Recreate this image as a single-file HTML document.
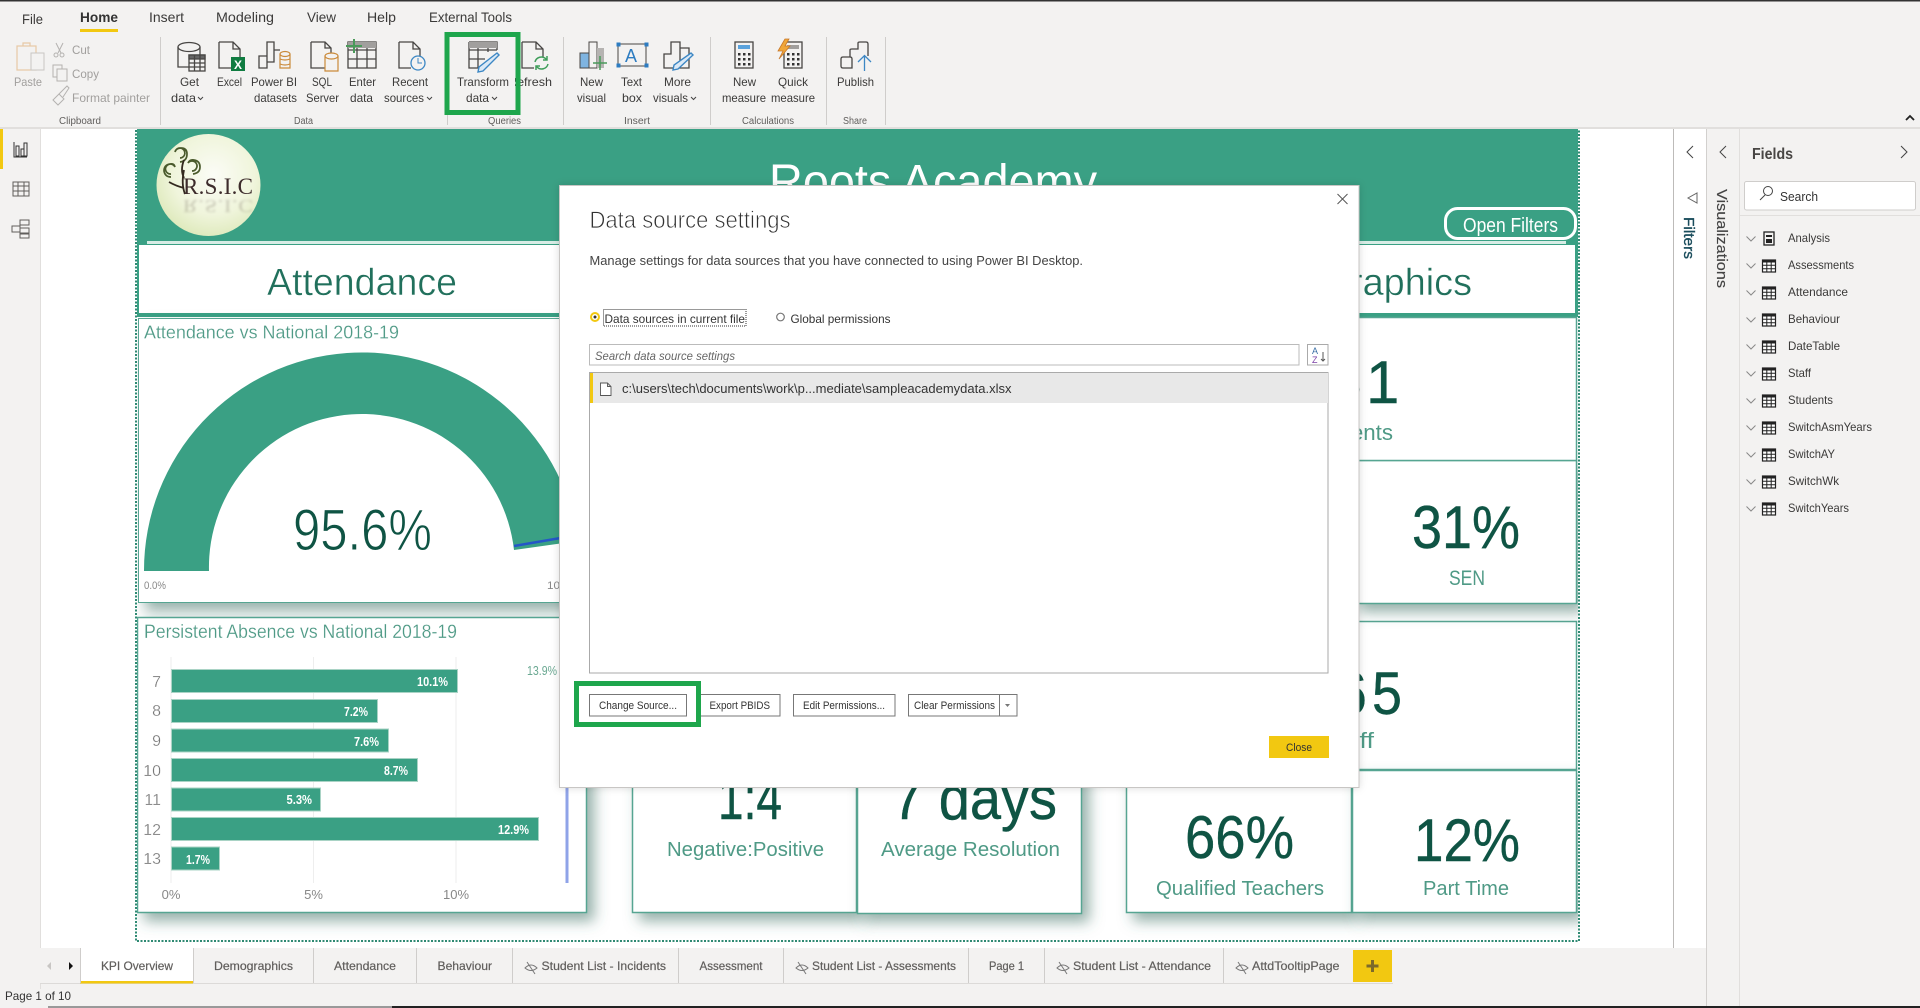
<!DOCTYPE html>
<html lang="en"><head><meta charset="utf-8"><title>Data source settings</title>
<style>
html,body{margin:0;padding:0;width:1920px;height:1008px;overflow:hidden;background:#fff}
svg{display:block}
text{font-family:"Liberation Sans",sans-serif;fill:#444;font-size:12px}
.thin{stroke:#fff;stroke-width:.45px}
.rb{font-size:12px;fill:#3b3a39}
.dis{fill:#a19f9d}
.grp{font-size:10px;fill:#605e5c}
.tab{font-size:14px;fill:#3b3a39}
.ic{fill:none;stroke:#484644;stroke-width:1.3}
.kl{font-size:22px;fill:#4f9a86}
.kv{font-size:60px;fill:#0f5444;stroke:#0f5444;stroke-width:.4px}
.pt{font-size:12px;fill:#605e5c;stroke:#605e5c;stroke-width:.2px}
.fl{font-size:12px;fill:#3b3a39}
.bv{font-size:13px;font-weight:bold;fill:#fff}
.cat{font-size:16px;fill:#777;stroke:#fff;stroke-width:.25px}
.ax{font-size:13px;fill:#888}
.btn{font-size:11px;fill:#333}
</style></head><body>
<svg width="1920" height="1008" viewBox="0 0 1920 1008" xmlns="http://www.w3.org/2000/svg">
<defs>
<filter id="s" x="-10%" y="-20%" width="125%" height="150%"><feDropShadow dx="7" dy="8" stdDeviation="7" flood-color="#3f6f63" flood-opacity=".55"/></filter>
<filter id="m" x="-3%" y="-3%" width="106%" height="106%"><feDropShadow dx="0" dy="0" stdDeviation="4" flood-color="#000" flood-opacity=".15"/></filter>
<filter id="b" x="-10%" y="-30%" width="120%" height="160%"><feGaussianBlur stdDeviation="1.2"/></filter>
<clipPath id="rep"><rect x="137" y="129" width="1441" height="812"/></clipPath>
<radialGradient id="lg" cx="55%" cy="40%" r="65%"><stop offset="0" stop-color="#fbfcf6"/><stop offset=".6" stop-color="#f0f5dc"/><stop offset="1" stop-color="#dce8b8"/></radialGradient>
<g id="t"><rect x="0" y="0" width="13" height="12" fill="#fff" stroke="#222" stroke-width="1.2"/><rect x="0" y="0" width="13" height="2.5" fill="#222"/><path d="M4.3 0V12M8.7 0V12M0 5.3H13M0 8.7H13" stroke="#222" stroke-width="1" fill="none"/></g>
<path id="ch" d="M0 0l4.500 4.500 4.500-4.500" fill="none" stroke="#888" stroke-width="1"/>
<path id="dd" d="M0 0l2.5 2.5L5 0" fill="none" stroke="#444" stroke-width="1"/>
<g id="eye"><path d="M0 5Q6-1 12 5Q6 10 0 5Z" fill="none" stroke="#777" stroke-width="1"/><path d="M2 -1L10 11" stroke="#777" stroke-width="1"/></g>
</defs>

<!-- base -->
<rect width="1920" height="1008" fill="#f3f2f1"/>
<rect x="0" y="0" width="1920" height="1.5" fill="#333"/>
<rect x="0" y="127" width="1920" height="2" fill="#e1dfdd"/>
<rect x="41" y="129" width="1632" height="819" fill="#fff"/>

<!-- ribbon tabs -->
<text x="22" y="24" textLength="21" lengthAdjust="spacingAndGlyphs" class="tab">File</text>
<text x="80" y="22" textLength="38" lengthAdjust="spacingAndGlyphs" class="tab" style="font-weight:bold;fill:#333">Home</text>
<rect x="80" y="29" width="38" height="3" fill="#f2c811"/>
<text x="149" y="22" textLength="35" lengthAdjust="spacingAndGlyphs" class="tab">Insert</text>
<text x="216" y="22" textLength="58" lengthAdjust="spacingAndGlyphs" class="tab">Modeling</text>
<text x="307" y="22" textLength="29" lengthAdjust="spacingAndGlyphs" class="tab">View</text>
<text x="367" y="22" textLength="29" lengthAdjust="spacingAndGlyphs" class="tab">Help</text>
<text x="429" y="22" textLength="83" lengthAdjust="spacingAndGlyphs" class="tab">External Tools</text>

<!-- separators -->
<path d="M160.500 37V125M447.500 37V125M563.500 37V125M710.500 37V125M826.500 37V125M885.500 37V125" stroke="#cfcdcb" stroke-width="1"/>

<!-- clipboard -->
<g fill="none" stroke="#e7c9a5" stroke-width="1.2"><rect x="17" y="46" width="19" height="24"/><path d="M23 46v-3h7v3"/></g>
<rect x="31" y="53" width="13" height="17" fill="#f3f2f1" stroke="#c8c6c4"/>
<text x="14" y="86" textLength="28" lengthAdjust="spacingAndGlyphs" class="rb dis">Paste</text>
<path d="M56 43l5 10M63 43l-5 10" stroke="#b4b2b0" fill="none"/><circle cx="56" cy="55" r="2" fill="none" stroke="#b4b2b0"/><circle cx="62" cy="55" r="2" fill="none" stroke="#b4b2b0"/>
<text x="72" y="54" textLength="18" lengthAdjust="spacingAndGlyphs" class="rb dis">Cut</text>
<rect x="53" y="65" width="9" height="12" fill="none" stroke="#b4b2b0"/><rect x="57" y="69" width="10" height="12" fill="#f3f2f1" stroke="#b4b2b0"/>
<text x="72" y="78" textLength="27" lengthAdjust="spacingAndGlyphs" class="rb dis">Copy</text>
<path d="M53 100l6-6 5 5-6 6zM59 94l8-8 2 2-6 9" fill="none" stroke="#b4b2b0"/>
<text x="72" y="102" textLength="78" lengthAdjust="spacingAndGlyphs" class="rb dis">Format painter</text>
<text x="59" y="124" textLength="42" lengthAdjust="spacingAndGlyphs" class="grp">Clipboard</text>

<!-- data group icons -->
<g class="ic">
<path d="M178 47v20h11M200 47v8"/><ellipse cx="189" cy="47" rx="11" ry="4.500"/>
<rect x="189" y="55" width="16" height="16" fill="#f3f2f1"/><rect x="189" y="55" width="16" height="4" fill="#666"/><path d="M194.500 55v16M200 55v16M189 63h16M189 67h16"/>
<path d="M219 42h14l7 7v8M219 42v26h12M233 42v7h7"/>
<path d="M267 42h7v20h-7zM259 56h8v12h-8zM274 50h6"/>
<path d="M311 42h14l6 6v5M311 42v26h14M325 42v6h6"/>
<path d="M348 42h28v26h-28zM348 50h28M348 59h28M357 42v26M367 42v26"/>
<path d="M399 42h14l7 7v7M399 42v26h12M413 42v7h7"/>
<path d="M469 42h28v8M469 42v26h12M469 50h28M469 59h16M478 42v26M488 42v10"/>
<path d="M522 42h14l7 7v8M522 42v26h12M536 42v7h7"/>
</g>
<rect x="348" y="42" width="28" height="6" fill="#a19f9d"/>
<rect x="469" y="42" width="28" height="6" fill="#a19f9d"/>
<rect x="231" y="57" width="14" height="14" fill="#107c41"/><text x="234" y="69" font-weight="bold" style="font-size:12px;fill:#fff;font-weight:bold">X</text>
<g fill="#f3f2f1" stroke="#ca8a3a" stroke-width="1.2"><path d="M280 54v14h10V54"/><ellipse cx="285" cy="54" rx="5" ry="2.500"/><path d="M280 59q5 2 10 0M280 64q5 2 10 0" fill="none"/>
<path d="M325 56v15h13V56"/><ellipse cx="331.500" cy="56" rx="6.500" ry="3"/></g>
<path d="M354 39v14M346 46h16" stroke="#4a9a5a" stroke-width="2"/>
<circle cx="418" cy="63" r="7" fill="#f3f2f1" stroke="#3c87c4" stroke-width="1.300"/><path d="M418 58v5h4" fill="none" stroke="#3c87c4"/>
<path d="M497 53l2 2-16 16-5 1 1-5z" fill="#dbe9f6" stroke="#3c87c4" stroke-width="1.400"/>
<g fill="none" stroke="#3f9e5a" stroke-width="1.500"><path d="M535 62a6.500 6.500 0 0 1 11-3l1 1M548 64a6.500 6.500 0 0 1-11 3l-1-1"/><path d="M547 56v4h-4M536 70v-4h4"/></g>

<!-- ribbon labels -->
<text x="180" y="86" textLength="19" lengthAdjust="spacingAndGlyphs" class="rb">Get</text><text x="171" y="102" textLength="25" lengthAdjust="spacingAndGlyphs" class="rb">data</text><use href="#dd" x="198" y="97"/>
<text x="217" y="86" textLength="25" lengthAdjust="spacingAndGlyphs" class="rb">Excel</text>
<text x="251" y="86" textLength="46" lengthAdjust="spacingAndGlyphs" class="rb">Power BI</text><text x="254" y="102" textLength="43" lengthAdjust="spacingAndGlyphs" class="rb">datasets</text>
<text x="312" y="86" textLength="20" lengthAdjust="spacingAndGlyphs" class="rb">SQL</text><text x="306" y="102" textLength="33" lengthAdjust="spacingAndGlyphs" class="rb">Server</text>
<text x="349" y="86" textLength="27" lengthAdjust="spacingAndGlyphs" class="rb">Enter</text><text x="350" y="102" textLength="23" lengthAdjust="spacingAndGlyphs" class="rb">data</text>
<text x="392" y="86" textLength="36" lengthAdjust="spacingAndGlyphs" class="rb">Recent</text><text x="384" y="102" textLength="40" lengthAdjust="spacingAndGlyphs" class="rb">sources</text><use href="#dd" x="427" y="97"/>
<text x="508" y="86" textLength="44" lengthAdjust="spacingAndGlyphs" class="rb">Refresh</text>
<rect x="506" y="73" width="9" height="16" fill="#f3f2f1"/>
<text x="457" y="86" textLength="52" lengthAdjust="spacingAndGlyphs" class="rb">Transform</text><text x="466" y="102" textLength="23" lengthAdjust="spacingAndGlyphs" class="rb">data</text><use href="#dd" x="492" y="97"/>
<text x="294" y="124" textLength="19" lengthAdjust="spacingAndGlyphs" class="grp">Data</text>
<text x="488" y="124" textLength="33" lengthAdjust="spacingAndGlyphs" class="grp">Queries</text>

<!-- green highlight ribbon -->
<rect x="447" y="34.500" width="71" height="78" fill="none" stroke="#1ea64c" stroke-width="5"/>

<!-- insert group -->
<rect x="580" y="53" width="10" height="15" fill="#7fb4e0" stroke="#484644"/><rect x="589" y="42" width="8" height="26" fill="#f3f2f1" stroke="#484644"/><rect x="597" y="48" width="7" height="20" fill="#b5b3b1"/>
<path d="M600 56v14M593 63h14" stroke="#4a9a5a" stroke-width="1.500"/>
<rect x="618" y="44" width="28" height="22" fill="#f3f2f1" stroke="#484644"/><path d="M617 43h3v3h-3zM645 43h3v3h-3zM617 64h3v3h-3zM645 64h3v3h-3z" fill="#2d7cc1" stroke="#2d7cc1"/>
<text x="625" y="62" style="font-size:18px;fill:#2d7cc1">A</text>
<g class="ic"><path d="M664 68V54h7V42h9v26zM664 68h25V48h-9"/></g>
<path d="M691 53l2 2-15 14-5 1 1-5z" fill="#dbe9f6" stroke="#3c87c4" stroke-width="1.400"/>
<text x="580" y="86" textLength="23" lengthAdjust="spacingAndGlyphs" class="rb">New</text><text x="577" y="102" textLength="29" lengthAdjust="spacingAndGlyphs" class="rb">visual</text>
<text x="621" y="86" textLength="21" lengthAdjust="spacingAndGlyphs" class="rb">Text</text><text x="622" y="102" textLength="20" lengthAdjust="spacingAndGlyphs" class="rb">box</text>
<text x="664" y="86" textLength="27" lengthAdjust="spacingAndGlyphs" class="rb">More</text><text x="653" y="102" textLength="35" lengthAdjust="spacingAndGlyphs" class="rb">visuals</text><use href="#dd" x="691" y="97"/>
<text x="624" y="124" textLength="26" lengthAdjust="spacingAndGlyphs" class="grp">Insert</text>

<!-- calculations -->
<rect x="735" y="42" width="18" height="26" fill="#f3f2f1" stroke="#484644" stroke-width="1.300"/><rect x="738" y="45" width="12" height="4" fill="#5aa2dc"/>
<path d="M738 53h2.500v2.500H738zM743 53h2.500v2.500H743zM748 53h2.500v2.500H748zM738 58h2.500v2.500H738zM743 58h2.500v2.500H743zM748 58h2.500v2.500H748zM738 63h2.500v2.500H738zM743 63h2.500v2.500H743zM748 63h2.500v2.500H748z" fill="#333"/>
<rect x="784" y="42" width="18" height="26" fill="#f3f2f1" stroke="#484644" stroke-width="1.300"/><rect x="787" y="45" width="12" height="4" fill="#a19f9d"/>
<path d="M787 53h2.500v2.500H787zM792 53h2.500v2.500H792zM797 53h2.500v2.500H797zM787 58h2.500v2.500H787zM792 58h2.500v2.500H792zM797 58h2.500v2.500H797zM787 63h2.500v2.500H787zM792 63h2.500v2.500H792zM797 63h2.500v2.500H797z" fill="#333"/>
<path d="M785 39l-7 12h5l-4 8 11-13h-5l4-7z" fill="#f0a73a" stroke="#c8782a" stroke-width=".8"/>
<text x="733" y="86" textLength="23" lengthAdjust="spacingAndGlyphs" class="rb">New</text><text x="722" y="102" textLength="44" lengthAdjust="spacingAndGlyphs" class="rb">measure</text>
<text x="778" y="86" textLength="30" lengthAdjust="spacingAndGlyphs" class="rb">Quick</text><text x="771" y="102" textLength="44" lengthAdjust="spacingAndGlyphs" class="rb">measure</text>
<text x="742" y="124" textLength="52" lengthAdjust="spacingAndGlyphs" class="grp">Calculations</text>

<!-- publish -->
<g class="ic"><path d="M846 68h-3q-2 0-2-2V59q0-2 2-2h7q2 0 2 2v9h-6M850 57v-7q0-1 2-1h6v-6q0-1 2-1h6q2 0 2 2v12"/></g>
<path d="M864.500 71V56M858 62l6.500-6.500L871 62" fill="none" stroke="#3c87c4" stroke-width="1.300"/>
<text x="837" y="86" textLength="37" lengthAdjust="spacingAndGlyphs" class="rb">Publish</text>
<text x="843" y="124" textLength="24" lengthAdjust="spacingAndGlyphs" class="grp">Share</text>
<path d="M1906 120l4-4 4 4" fill="none" stroke="#222" stroke-width="1.800"/>

<!-- left rail -->
<rect x="0" y="129" width="3" height="40" fill="#f2c811"/>
<rect x="40" y="129" width="1" height="860" fill="#e1dfdd"/>
<path d="M14 142v15h13M16 146h3v10h-3zM21 149h3v7h-3zM24 143h3v13h-3z" fill="none" stroke="#333" stroke-width="1"/>
<g fill="none" stroke="#605e5c" stroke-width="1"><rect x="13" y="182" width="16" height="14"/><path d="M13 186h16M13 191h16M18 182v14M24 182v14"/>
<rect x="20" y="220" width="9" height="5"/><rect x="12" y="226" width="8" height="6"/><rect x="20" y="228" width="9" height="5"/><rect x="20" y="234" width="9" height="4"/></g>

<!-- report header -->
<rect x="137" y="129" width="1441" height="112" fill="#3aa084"/>
<rect x="137" y="241" width="1441" height="76" fill="#3aa084"/>
<ellipse cx="208.500" cy="185" rx="52" ry="51" fill="url(#lg)"/>
<g fill="none" stroke="#4a5a2c" stroke-width="1.700">
<path d="M180 158a5 5 0 1 0-5-6q1-4 6-4 6 0 6 6 0 7-7 8"/>
<path d="M171 174a5 5 0 1 1 4-7q-1-4-5-3-6 1-6 7 1 6 7 6"/>
<path d="M192 171a5 5 0 1 0-4-8q2-4 6-3 6 1 6 7 0 6-7 7"/>
</g>
<path d="M185 194Q181 184 184 170M184 188Q176 186 169 182M184 178Q180 170 184 160" fill="none" stroke="#33291f" stroke-width="1.800"/>
<g opacity=".28" filter="url(#b)"><text x="183" y="-250" transform="scale(1,-.8)" textLength="70" lengthAdjust="spacing" style="font-family:'Liberation Serif',serif;font-size:22px;fill:#55493c">R.S.I.C</text></g>
<text x="183" y="194" textLength="70" lengthAdjust="spacing" style="font-family:'Liberation Serif',serif;font-size:23px;fill:#3d2c2c">R.S.I.C</text>
<text x="769" y="198" textLength="328" lengthAdjust="spacingAndGlyphs" style="font-size:48px;fill:#fff">Roots Academy</text>
<rect x="1445.500" y="208.500" width="130" height="30" rx="12" fill="none" stroke="#fff" stroke-width="3"/>
<text x="1463" y="232" textLength="95" lengthAdjust="spacingAndGlyphs" style="font-size:20px;fill:#fff">Open Filters</text>

<rect x="147" y="241" width="1419" height="3" fill="#d7ece5"/>
<rect x="139" y="245" width="422" height="68" fill="#fff"/>
<rect x="1100" y="245" width="475" height="68" fill="#fff"/>
<text x="267" y="295" textLength="190" lengthAdjust="spacingAndGlyphs" class="thin" style="font-size:38px;fill:#21705c">Attendance</text>
<text x="1350" y="295" textLength="122" lengthAdjust="spacingAndGlyphs" class="thin" style="font-size:38px;fill:#21705c">raphics</text>

<!-- canvas cards -->
<g clip-path="url(#rep)">
<rect x="138.500" y="318.500" width="450" height="284" fill="#fff" stroke="#56a592" stroke-width="1" filter="url(#s)"/>
<rect x="137.500" y="617.500" width="449" height="295" fill="#fff" stroke="#56a592" stroke-width="1.500" filter="url(#s)"/>
<rect x="632.500" y="770.500" width="224" height="142" fill="#fff" stroke="#56a592" stroke-width="1.500" filter="url(#s)"/>
<rect x="857.500" y="770.500" width="224" height="143" fill="#fff" stroke="#56a592" stroke-width="1.500" filter="url(#s)"/>
<rect x="1126.500" y="770.500" width="225" height="142" fill="#fff" stroke="#56a592" stroke-width="1.500" filter="url(#s)"/>
<rect x="1352.500" y="621.500" width="224" height="148" fill="#fff" stroke="#56a592" stroke-width="1.500"/>
<rect x="1352.500" y="770.500" width="224" height="142" fill="#fff" stroke="#56a592" stroke-width="1.500" filter="url(#s)"/>
<rect x="1128.500" y="621.500" width="224" height="148" fill="#fff" stroke="#56a592" stroke-width="1.500"/>
<rect x="1352.500" y="460.500" width="224" height="143" fill="#fff" stroke="#56a592" stroke-width="1.500" filter="url(#s)"/>
<rect x="1128.500" y="460.500" width="224" height="143" fill="#fff" stroke="#56a592" stroke-width="1.500"/>
<rect x="1128.500" y="317.500" width="448" height="143" fill="#fff" stroke="#56a592" stroke-width="1.500"/>
</g>

<!-- attendance gauge -->
<text x="144" y="338.500" textLength="255" lengthAdjust="spacingAndGlyphs" class="thin" style="font-size:18px;fill:#4f9a86;stroke-width:.2px">Attendance vs National 2018-19</text>
<path d="M144 571A218 218 0 0 1 578 541L514 550A153 153 0 0 0 209 571Z" fill="#3aa084"/>
<path d="M514 546L578 535" stroke="#2456c8" stroke-width="2.500"/>
<text x="293" y="550" textLength="139" lengthAdjust="spacingAndGlyphs" class="thin" style="font-size:58px;fill:#0f5444;stroke-width:.9px">95.6%</text>
<text x="144" y="589" textLength="22" lengthAdjust="spacingAndGlyphs" style="font-size:11px;fill:#888">0.0%</text>
<text x="547" y="589" textLength="30" lengthAdjust="spacingAndGlyphs" style="font-size:11px;fill:#888">100%</text>

<!-- absence chart -->
<text x="144" y="638" textLength="313" lengthAdjust="spacingAndGlyphs" class="thin" style="font-size:19px;fill:#4f9a86;stroke-width:.2px">Persistent Absence vs National 2018-19</text>
<path d="M171 657V883M313.500 657V883M456 657V883" stroke="#eeeeee" stroke-width="1"/>
<g fill="#3aa084" stroke="#a9d3c5" stroke-width="1">
<rect x="171.500" y="669.500" width="286" height="23"/>
<rect x="171.500" y="699.500" width="206" height="23"/>
<rect x="171.500" y="729" width="217" height="23"/>
<rect x="171.500" y="758.500" width="246" height="23"/>
<rect x="171.500" y="788" width="149" height="23"/>
<rect x="171.500" y="817.500" width="367" height="23"/>
<rect x="171.500" y="847" width="48" height="23"/>
</g>
<text x="417" y="686" textLength="31" lengthAdjust="spacingAndGlyphs" class="bv">10.1%</text>
<text x="344" y="716" textLength="24" lengthAdjust="spacingAndGlyphs" class="bv">7.2%</text>
<text x="354" y="746" textLength="25" lengthAdjust="spacingAndGlyphs" class="bv">7.6%</text>
<text x="384" y="775" textLength="24" lengthAdjust="spacingAndGlyphs" class="bv">8.7%</text>
<text x="286.500" y="804" textLength="25.500" lengthAdjust="spacingAndGlyphs" class="bv">5.3%</text>
<text x="498" y="834" textLength="31" lengthAdjust="spacingAndGlyphs" class="bv">12.9%</text>
<text x="186" y="864" textLength="24" lengthAdjust="spacingAndGlyphs" class="bv">1.7%</text>
<g text-anchor="end"><text x="161" y="687" class="cat">7</text><text x="161" y="716" class="cat">8</text><text x="161" y="746" class="cat">9</text><text x="161" y="776" class="cat">10</text><text x="161" y="805" class="cat">11</text><text x="161" y="835" class="cat">12</text><text x="161" y="864" class="cat">13</text></g>
<g text-anchor="middle"><text x="171" y="899" class="ax">0%</text><text x="313.500" y="899" class="ax">5%</text><text x="456" y="899" class="ax">10%</text></g>
<text x="527" y="675" textLength="30" lengthAdjust="spacingAndGlyphs" style="font-size:13px;fill:#6aa892">13.9%</text>
<rect x="565.500" y="700" width="3" height="183" fill="#8fa3e8"/>

<!-- KPIs -->
<text x="1296" y="403" textLength="66" lengthAdjust="spacingAndGlyphs" class="kv">65</text>
<text x="1366" y="403" class="kv">1</text>
<text x="1305" y="440" textLength="88" lengthAdjust="spacingAndGlyphs" class="kl">Students</text>
<text x="1412" y="548" textLength="108" lengthAdjust="spacingAndGlyphs" class="kv">31%</text>
<text x="1449" y="585" textLength="36" lengthAdjust="spacingAndGlyphs" class="kl" style="font-size:21px">SEN</text>
<text x="1335" y="714" textLength="32" lengthAdjust="spacingAndGlyphs" class="kv">6</text>
<text x="1372" y="714" textLength="30" lengthAdjust="spacingAndGlyphs" class="kv">5</text>
<text x="1319" y="748" textLength="55" lengthAdjust="spacingAndGlyphs" class="kl">Staff</text>
<text x="1414" y="861" textLength="106" lengthAdjust="spacingAndGlyphs" class="kv">12%</text>
<text x="1423" y="895" textLength="86" lengthAdjust="spacingAndGlyphs" class="kl" style="font-size:20px">Part Time</text>
<text x="1185" y="858" textLength="109" lengthAdjust="spacingAndGlyphs" class="kv">66%</text>
<text x="1156" y="895" textLength="168" lengthAdjust="spacingAndGlyphs" class="kl" style="font-size:20px">Qualified Teachers</text>
<text x="718" y="819" textLength="64" lengthAdjust="spacingAndGlyphs" class="kv">1:4</text>
<text x="892" y="819" textLength="165" lengthAdjust="spacingAndGlyphs" class="kv">7 days</text>
<text x="667" y="856" textLength="157" lengthAdjust="spacingAndGlyphs" class="kl" style="font-size:20px">Negative:Positive</text>
<text x="881" y="856" textLength="179" lengthAdjust="spacingAndGlyphs" class="kl" style="font-size:20px">Average Resolution</text>

<!-- dotted report boundary -->
<path d="M136 130V941H1579V130" fill="none" stroke="#2f8a73" stroke-width="2" stroke-dasharray="2 1.500"/>

<!-- side panes -->
<rect x="1673" y="129" width="1" height="819" fill="#bdbbb9"/>
<rect x="1674" y="129" width="32" height="819" fill="#fff"/>
<rect x="1706" y="129" width="1" height="879" fill="#d2d0ce"/>
<rect x="1739" y="129" width="1" height="879" fill="#e1dfdd"/>
<path d="M1693 146l-6 6 6 6M1726 146l-6 6 6 6M1901 146l6 6-6 6" fill="none" stroke="#444" stroke-width="1"/>
<path d="M1697 193v10l-9-5z" fill="none" stroke="#666" stroke-width="1"/>
<text transform="translate(1684,217) rotate(90)" textLength="42" lengthAdjust="spacingAndGlyphs" style="font-size:15px;fill:#1b4d5c;stroke:#1b4d5c;stroke-width:.35px">Filters</text>
<text transform="translate(1717,189) rotate(90)" textLength="99" lengthAdjust="spacingAndGlyphs" style="font-size:15px;fill:#444;stroke:#444;stroke-width:.15px">Visualizations</text>
<text x="1752" y="159" textLength="41" lengthAdjust="spacingAndGlyphs" style="font-size:16px;font-weight:bold;fill:#484644">Fields</text>
<rect x="1744.500" y="181.500" width="171" height="28.500" rx="2" fill="#fff" stroke="#cfcdcb"/>
<circle cx="1768" cy="191" r="4.500" fill="none" stroke="#444"/><path d="M1765 195l-5 5" stroke="#444"/>
<text x="1780" y="201" textLength="38" lengthAdjust="spacingAndGlyphs" style="font-size:13px;fill:#333">Search</text>
<rect x="1740" y="215" width="180" height="1" fill="#e1dfdd"/>
<use href="#ch" x="1746.500" y="236.500"/><use href="#ch" x="1746.500" y="263.500"/><use href="#ch" x="1746.500" y="290.500"/><use href="#ch" x="1746.500" y="317.500"/><use href="#ch" x="1746.500" y="344.500"/><use href="#ch" x="1746.500" y="371.500"/><use href="#ch" x="1746.500" y="398.500"/><use href="#ch" x="1746.500" y="425.500"/><use href="#ch" x="1746.500" y="452.500"/><use href="#ch" x="1746.500" y="479.500"/><use href="#ch" x="1746.500" y="506.500"/>
<rect x="1764" y="232" width="10" height="13" fill="#f3f2f1" stroke="#222" stroke-width="1.300"/><path d="M1766 235h6v2h-6zM1766 239h6v4h-6z" fill="#222"/>
<use href="#t" x="1762.500" y="260"/><use href="#t" x="1762.500" y="287"/><use href="#t" x="1762.500" y="314"/><use href="#t" x="1762.500" y="341"/><use href="#t" x="1762.500" y="368"/><use href="#t" x="1762.500" y="395"/><use href="#t" x="1762.500" y="422"/><use href="#t" x="1762.500" y="449"/><use href="#t" x="1762.500" y="476"/><use href="#t" x="1762.500" y="503"/>
<text x="1788" y="242" textLength="42" lengthAdjust="spacingAndGlyphs" class="fl">Analysis</text>
<text x="1788" y="269" textLength="66" lengthAdjust="spacingAndGlyphs" class="fl">Assessments</text>
<text x="1788" y="296" textLength="60" lengthAdjust="spacingAndGlyphs" class="fl">Attendance</text>
<text x="1788" y="323" textLength="52" lengthAdjust="spacingAndGlyphs" class="fl">Behaviour</text>
<text x="1788" y="350" textLength="52" lengthAdjust="spacingAndGlyphs" class="fl">DateTable</text>
<text x="1788" y="377" textLength="23" lengthAdjust="spacingAndGlyphs" class="fl">Staff</text>
<text x="1788" y="404" textLength="45" lengthAdjust="spacingAndGlyphs" class="fl">Students</text>
<text x="1788" y="431" textLength="84" lengthAdjust="spacingAndGlyphs" class="fl">SwitchAsmYears</text>
<text x="1788" y="458" textLength="47" lengthAdjust="spacingAndGlyphs" class="fl">SwitchAY</text>
<text x="1788" y="485" textLength="51" lengthAdjust="spacingAndGlyphs" class="fl">SwitchWk</text>
<text x="1788" y="512" textLength="61" lengthAdjust="spacingAndGlyphs" class="fl">SwitchYears</text>

<!-- page tabs -->
<rect x="40" y="948" width="1633" height="35" fill="#f3f2f1"/>
<rect x="40" y="983" width="1353" height="1" fill="#dcdad8"/>
<rect x="80" y="948" width="113" height="35" fill="#fff"/>
<rect x="80" y="981" width="113" height="2.500" fill="#f2c811"/>
<path d="M80.500 948V983M193.500 948V983M313.500 948V983M416.500 948V983M512.500 948V983M678.500 948V983M783.500 948V983M968.500 948V983M1044.500 948V983M1223.500 948V983" stroke="#cfcdcb"/>
<path d="M51 962l-4 4 4 4z" fill="#c8c6c4"/><path d="M69 962l4 4-4 4z" fill="#111"/>
<text x="101" y="970" textLength="72" lengthAdjust="spacingAndGlyphs" class="pt">KPI Overview</text>
<text x="214" y="970" textLength="79" lengthAdjust="spacingAndGlyphs" class="pt">Demographics</text>
<text x="334" y="970" textLength="62" lengthAdjust="spacingAndGlyphs" class="pt">Attendance</text>
<text x="437.500" y="970" textLength="54.500" lengthAdjust="spacingAndGlyphs" class="pt">Behaviour</text>
<use href="#eye" x="525" y="963"/><text x="541.500" y="970" textLength="124.500" lengthAdjust="spacingAndGlyphs" class="pt">Student List - Incidents</text>
<text x="699.500" y="970" textLength="63" lengthAdjust="spacingAndGlyphs" class="pt">Assessment</text>
<use href="#eye" x="796" y="963"/><text x="812" y="970" textLength="144" lengthAdjust="spacingAndGlyphs" class="pt">Student List - Assessments</text>
<text x="989" y="970" textLength="35" lengthAdjust="spacingAndGlyphs" class="pt">Page 1</text>
<use href="#eye" x="1057" y="963"/><text x="1073" y="970" textLength="138" lengthAdjust="spacingAndGlyphs" class="pt">Student List - Attendance</text>
<use href="#eye" x="1236" y="963"/><text x="1252" y="970" textLength="87.500" lengthAdjust="spacingAndGlyphs" class="pt">AttdTooltipPage</text>
<rect x="1353" y="950" width="39" height="32" fill="#f2c811"/>
<path d="M1372.500 960v12M1366.500 966h12" stroke="#7c6a2a" stroke-width="3"/>
<text x="5" y="1000" textLength="66" lengthAdjust="spacingAndGlyphs" style="font-size:12px;fill:#333">Page 1 of 10</text>
<rect x="48" y="1006" width="344" height="2" fill="#999"/><rect x="392" y="1006" width="1528" height="2" fill="#222"/>

<!-- modal -->
<rect x="559.500" y="185.500" width="799.500" height="602" fill="#fff" stroke="#c8c6c4" filter="url(#m)"/>
<path d="M1337.500 194l10 10M1347.500 194l-10 10" stroke="#555" stroke-width="1"/>
<text x="589.500" y="228" textLength="201" lengthAdjust="spacingAndGlyphs" class="thin" style="font-size:24px;fill:#333;stroke-width:.7px">Data source settings</text>
<text x="589.500" y="265" textLength="493.500" lengthAdjust="spacingAndGlyphs" style="font-size:13px;fill:#444">Manage settings for data sources that you have connected to using Power BI Desktop.</text>
<circle cx="595" cy="317" r="4" fill="#fff" stroke="#f2c811" stroke-width="2"/><circle cx="595" cy="317" r="1.500" fill="#333"/>
<rect x="603.500" y="309.500" width="142.500" height="16.500" fill="none" stroke="#333" stroke-dasharray="1 1"/>
<text x="604.500" y="323" textLength="140.500" lengthAdjust="spacingAndGlyphs" style="font-size:12px;fill:#333">Data sources in current file</text>
<circle cx="780.500" cy="317" r="3.800" fill="#fff" stroke="#777" stroke-width="1.200"/>
<text x="790.500" y="323" textLength="100" lengthAdjust="spacingAndGlyphs" style="font-size:12px;fill:#333">Global permissions</text>
<rect x="589.500" y="344.500" width="709.500" height="20.500" fill="#fff" stroke="#bbb"/>
<text x="595" y="360" textLength="140" lengthAdjust="spacingAndGlyphs" style="font-size:12px;font-style:italic;fill:#666">Search data source settings</text>
<rect x="1307.500" y="344.500" width="20.500" height="20.500" fill="#fff" stroke="#aaa"/>
<text x="1312" y="354" style="font-size:9px;fill:#3a6ea5">A</text><text x="1312" y="363" style="font-size:9px;fill:#7a3ea5">Z</text><path d="M1323 352v9M1321 359l2 2 2-2" fill="none" stroke="#555"/>
<rect x="589.500" y="372.500" width="738.500" height="300.500" fill="#fff" stroke="#aaa"/>
<rect x="590" y="373" width="738" height="30" fill="#e8e8e8"/>
<rect x="590" y="373" width="3" height="30" fill="#f2c811"/>
<path d="M600.500 383h7l3.500 3.500V395.500H600.500zM607.500 383v3.500H611" fill="#fff" stroke="#555" stroke-width=".9"/>
<text x="622" y="393" textLength="389.500" lengthAdjust="spacingAndGlyphs" style="font-size:12.500px;fill:#333">c:\users\tech\documents\work\p...mediate\sampleacademydata.xlsx</text>

<rect x="589.500" y="694.500" width="97" height="21.500" fill="#fff" stroke="#777"/>
<text x="599" y="709" textLength="78" lengthAdjust="spacingAndGlyphs" class="btn">Change Source...</text>
<rect x="700.500" y="694.500" width="79.500" height="21.500" fill="#fff" stroke="#777"/>
<text x="709.500" y="709" textLength="60.500" lengthAdjust="spacingAndGlyphs" class="btn">Export PBIDS</text>
<rect x="793.500" y="694.500" width="101.500" height="21.500" fill="#fff" stroke="#777"/>
<text x="803" y="709" textLength="82" lengthAdjust="spacingAndGlyphs" class="btn">Edit Permissions...</text>
<rect x="908.500" y="694.500" width="108.500" height="21.500" fill="#fff" stroke="#777"/>
<path d="M999.500 694.500V716" stroke="#777"/>
<text x="914" y="709" textLength="81" lengthAdjust="spacingAndGlyphs" class="btn">Clear Permissions</text>
<path d="M1005 704h5l-2.500 3z" fill="#777"/>
<rect x="576.500" y="683.500" width="122" height="41" fill="none" stroke="#1ea64c" stroke-width="5"/>
<rect x="1269" y="736" width="60" height="22" fill="#f2c811"/>
<text x="1286" y="751" textLength="26" lengthAdjust="spacingAndGlyphs" class="btn">Close</text>
</svg>
</body></html>
